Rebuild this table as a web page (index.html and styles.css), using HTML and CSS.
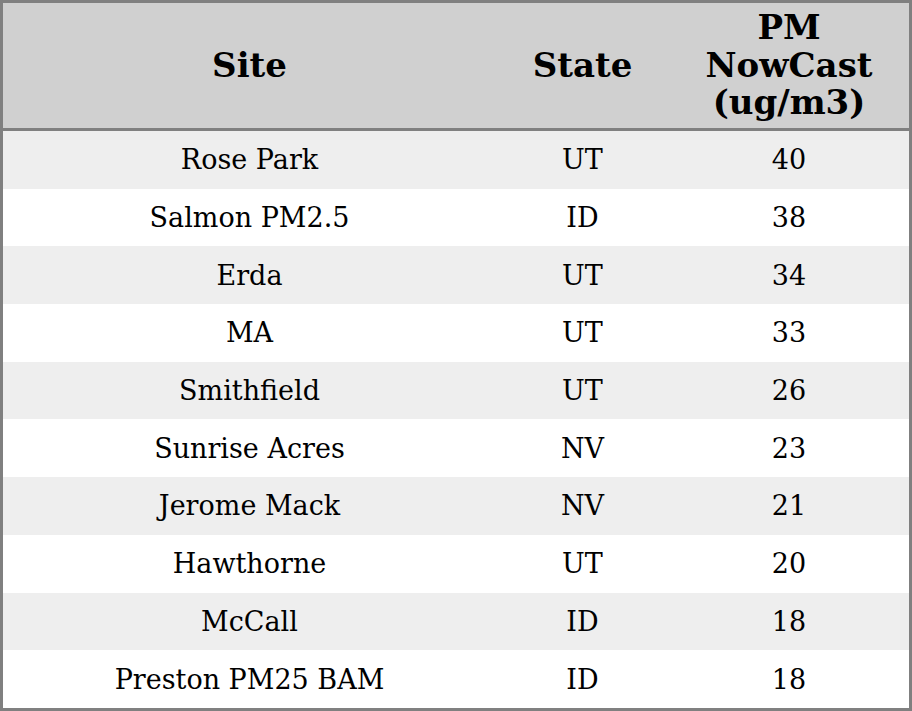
FILE: index.html
```html
<!DOCTYPE html>
<html>
<head>
<meta charset="utf-8">
<link rel="stylesheet" href="styles.css">
</head>
<body>
<table class="aq">
  <colgroup>
    <col class="c-site">
    <col class="c-state">
    <col class="c-pm">
  </colgroup>
  <thead>
    <tr class="head-row"><th>Site</th><th>State</th><th>PM NowCast (ug/m3)</th></tr>
  </thead>
  <tbody>
    <tr><td>Rose Park</td><td>UT</td><td>40</td></tr>
    <tr><td>Salmon PM2.5</td><td>ID</td><td>38</td></tr>
    <tr><td>Erda</td><td>UT</td><td>34</td></tr>
    <tr><td>MA</td><td>UT</td><td>33</td></tr>
    <tr><td>Smithfield</td><td>UT</td><td>26</td></tr>
    <tr><td>Sunrise Acres</td><td>NV</td><td>23</td></tr>
    <tr><td>Jerome Mack</td><td>NV</td><td>21</td></tr>
    <tr><td>Hawthorne</td><td>UT</td><td>20</td></tr>
    <tr><td>McCall</td><td>ID</td><td>18</td></tr>
    <tr><td>Preston PM25 BAM</td><td>ID</td><td>18</td></tr>
  </tbody>
</table>
</body>
</html>
```
FILE: styles.css
```css
html, body {
  margin: 0;
  padding: 0;
  background: #ffffff;
}
.aq {
  width: 912px;
  height: 711px;
  table-layout: fixed;
  border-collapse: separate;
  border-spacing: 0;
  border: 3px solid #808080;
  font-family: "DejaVu Serif", serif;
  color: #000;
  text-align: center;
}
.c-site { width: 493px; }
.c-state { width: 173px; }
.c-pm { width: 240px; }
.aq th {
  background: #d0d0d0;
  font-size: 34px;
  font-weight: bold;
  line-height: 37.5px;
  padding: 0;
  height: 125px;
  border-bottom: 3px solid #808080;
  vertical-align: middle;
}
.aq td {
  font-size: 27px;
  padding: 0;
  height: 57.7px;
  vertical-align: middle;
}
.aq tbody tr:nth-child(odd) td {
  background: #eeeeee;
}
```
